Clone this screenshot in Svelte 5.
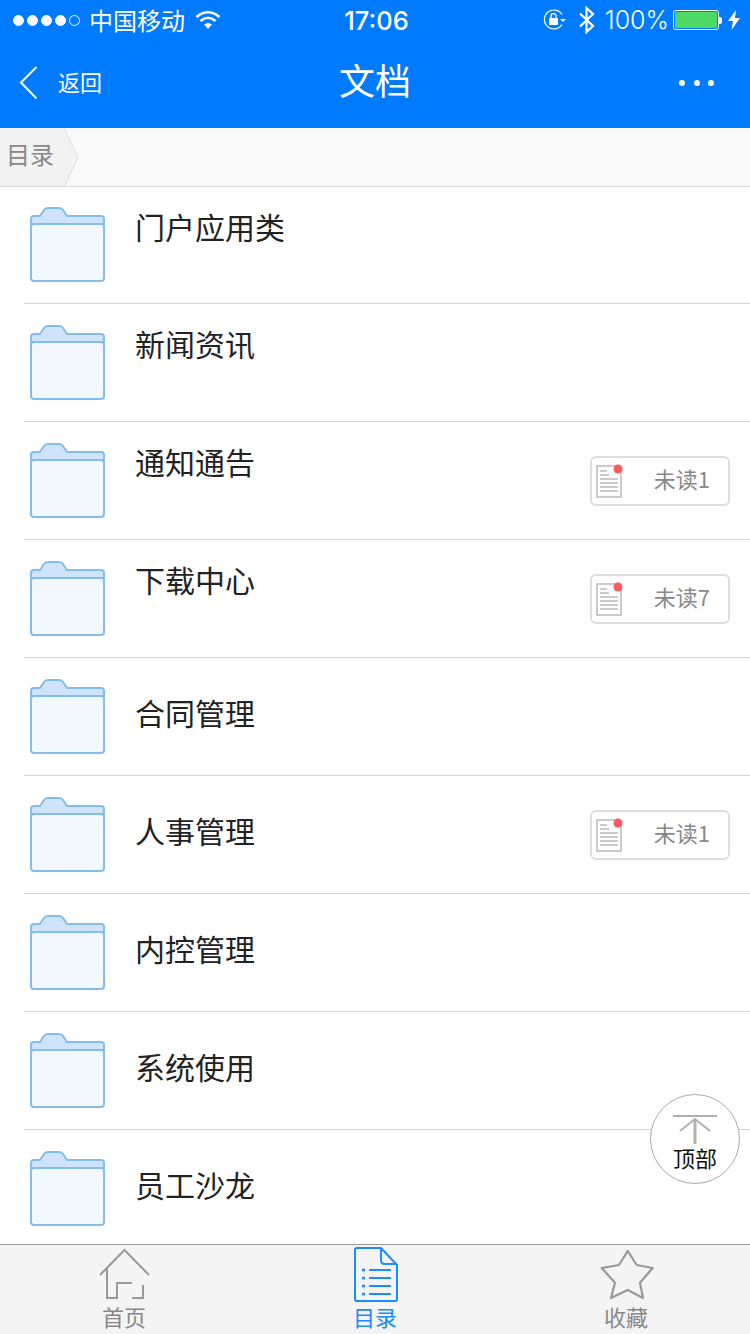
<script>
  const folders = [
    { name: '门户应用类', raised: true },
    { name: '新闻资讯', raised: true },
    { name: '通知通告', raised: true, unread: 1 },
    { name: '下载中心', raised: true, unread: 7 },
    { name: '合同管理' },
    { name: '人事管理', unread: 1 },
    { name: '内控管理' },
    { name: '系统使用' },
    { name: '员工沙龙' },
  ];
</script>

<div class="page">
  <header class="top">
    <div class="status">
      <div class="status-left">
        <span class="dots">
          <i></i><i></i><i></i><i></i><i class="empty"></i>
        </span>
        <span class="carrier">中国移动</span>
        <svg width="26" height="20" viewBox="0 0 26 20" fill="none" stroke="#fff" stroke-width="2.6">
          <path d="M1.5 7 Q13 -2.5 24.5 7" />
          <path d="M5.5 11 Q13 4.5 20.5 11" />
          <path d="M13 19 L9 14.5 Q13 11.5 17 14.5 Z" fill="#fff" stroke="none" />
        </svg>
      </div>
      <div class="time">17:06</div>
      <div class="status-right">
        <svg width="24" height="22" viewBox="0 0 24 22" fill="none">
          <path d="M19 5.5 A9.5 9.5 0 1 0 19 15.5" stroke="#fff" stroke-width="1.2" />
          <path d="M17 10 H23 L20 13 Z" fill="#fff" />
          <rect x="6" y="9" width="9" height="7" rx="1" fill="#fff" />
          <path d="M8 9 V7 A2.5 2.5 0 0 1 13 7 V9" stroke="#fff" stroke-width="1.3" />
        </svg>
        <svg class="bt" width="18" height="28" viewBox="0 0 18 28" fill="none" stroke="#fff" stroke-width="2.2">
          <path d="M2 7.5 L15 20 L8.5 26 V2 L15 8 L2 20.5" />
        </svg>
        <span class="percent">100%</span>
        <span class="battery"><span class="level"></span></span>
        <span class="nub"></span>
        <svg class="bolt" width="12" height="20" viewBox="0 0 12 20">
          <path d="M8 0 L0 11 H5 L3.500 20 L12 8 H7 Z" fill="#fff" />
        </svg>
      </div>
    </div>
    <nav class="nav">
      <div class="back">
        <svg width="19" height="34" viewBox="0 0 19 34" fill="none" stroke="#fff" stroke-width="2">
          <path d="M17.500 1 L2 16.500 L17.500 32.500" />
        </svg>
        <span>返回</span>
      </div>
      <div class="title">文档</div>
      <div class="more"><i></i><i></i><i></i></div>
    </nav>
  </header>

  <div class="crumbs">
    <span class="crumb">目录</span>
    <svg width="15" height="59" viewBox="0 0 15 59">
      <path d="M0 0 L14 29.500 L0 59 Z" fill="#f2f2f2" />
      <path d="M0 0 L14 29.500 L0 59" fill="none" stroke="#ddd" stroke-width="1" />
    </svg>
  </div>

  <ul class="list">
    {#each folders as item}
      <li class="row">
        <svg class="folder" width="76" height="76" viewBox="0 0 76 76">
          <rect x="1" y="17" width="73" height="57" rx="3" fill="#f3f8fe" stroke="#84bcee" stroke-width="2" />
          <path d="M1 17 V12 Q1 9 4 9 H10 L14 3 Q15 1 18 1 H29 Q32 1 33 3 L37 9 H71 Q74 9 74 12 V17 Z" fill="#cfe4fa" stroke="#84bcee" stroke-width="2" stroke-linejoin="round" />
        </svg>
        <span class="name" class:raised={item.raised}>{item.name}</span>
        {#if item.unread}
          <span class="badge">
            <svg width="28" height="36" viewBox="0 0 28 36" fill="none">
              <path d="M1 3 H20 L25 8 V34 H1 Z" fill="#fff" stroke="#bbb" stroke-width="1.500" />
              <path d="M4 8 H11 M4 12 H13 M4 16 H22 M4 20 H22 M4 24 H22 M4 28 H22" stroke="#bbb" stroke-width="1.500" />
              <circle cx="22" cy="6" r="4.500" fill="#ff5a5f" />
            </svg>
            <span class="unread">未读{item.unread}</span>
          </span>
        {/if}
      </li>
    {/each}
  </ul>

  <button class="to-top">
    <svg width="46" height="30" viewBox="0 0 46 30" fill="none" stroke="#b0b0b0" stroke-width="2">
      <path d="M1 1 H45" />
      <path d="M8 16 L23 4 L38 16" />
      <path d="M23 5 V29" stroke-width="3" />
    </svg>
    <span>顶部</span>
  </button>

  <footer class="tabs">
    <div class="tab">
      <svg width="52" height="56" viewBox="-1 0 52 56" fill="none" stroke="#999" stroke-width="2">
        <path d="M1 28 L25.500 3 L50 28" />
        <path d="M8 21 V51 H18 V36 H33" />
        <path d="M44 38 V51 H33" />
      </svg>
      <span>首页</span>
    </div>
    <div class="tab active">
      <svg width="46" height="56" viewBox="-2 0 46 56" fill="none" stroke="#1a8cff" stroke-width="2">
        <path d="M3 1 H27 L43 18 V52 Q43 54 41 54 H3 Q1 54 1 52 V3 Q1 1 3 1 Z" />
        <path d="M27 1 V13 Q27 17 31 17 H43" />
        <path d="M15 23 H37 M15 31 H37 M15 39 H37 M15 47 H37" />
        <path d="M8 23 H11 M8 31 H11 M8 39 H11 M8 47 H11" stroke-width="2.500" />
      </svg>
      <span>目录</span>
    </div>
    <div class="tab">
      <svg width="56" height="56" viewBox="0 0 56 56" fill="none" stroke="#999" stroke-width="2.200">
        <path d="M29.700 4 L38.700 18 L54.700 21 L42 35.700 L45 51 L29.700 43 L13 51 L17 35.700 L3.700 21 L21 18 Z" stroke-linejoin="round" />
      </svg>
      <span>收藏</span>
    </div>
  </footer>
</div>

<style>
  :global(body) {
    margin: 0;
    background: #fff;
  }
  .page {
    position: relative;
    display: flex;
    flex-direction: column;
    height: 1334px;
    overflow: hidden;
    font-family: "Noto Sans CJK SC", "Liberation Sans", sans-serif;
    color: #222;
  }
  .top {
    background: #007aff;
    color: #fff;
    height: 128px;
    flex-shrink: 0;
  }
  .status {
    display: grid;
    grid-template-columns: 1fr auto 1fr;
    align-items: center;
    height: 40px;
    padding: 0 10px 0 13px;
    font-family: Inter, "Noto Sans CJK SC", sans-serif;
    font-size: 24px;
  }
  .status-left {
    display: flex;
    align-items: center;
  }
  .dots {
    display: flex;
    gap: 3px;
  }
  .dots i {
    width: 11px;
    height: 11px;
    border-radius: 50%;
    background: #fff;
    border: 1px solid #fff;
    box-sizing: border-box;
  }
  .dots .empty {
    background: none;
  }
  .carrier {
    font-family: "Noto Sans CJK SC", sans-serif;
    margin: 0 10px 0 9px;
    line-height: 38px;
  }
  .time {
    font-weight: 500;
    font-size: 25.500px;
  }
  .status-right {
    display: flex;
    align-items: center;
    justify-content: flex-end;
  }
  .bt {
    margin-left: 11px;
  }
  .percent {
    margin-left: 9px;
    font-size: 25px;
    font-weight: 300;
  }
  .battery {
    margin-left: 4px;
    width: 46px;
    height: 20px;
    border: 1px solid #fff;
    border-radius: 3px;
    box-sizing: border-box;
    padding: 1px;
    display: flex;
  }
  .level {
    flex: 1;
    background: #4cd964;
    border-radius: 2px;
  }
  .nub {
    width: 3px;
    height: 7px;
    background: #fff;
    border-radius: 0 2px 2px 0;
  }
  .bolt {
    margin-left: 6px;
  }
  .nav {
    display: grid;
    grid-template-columns: 1fr auto 1fr;
    align-items: center;
    height: 88px;
    padding: 0 36px 2px;
    box-sizing: border-box;
  }
  .back {
    display: flex;
    align-items: center;
    gap: 20px;
    margin-left: -17px;
    font-size: 22px;
  }
  .back span {
    padding-bottom: 4px;
  }
  .title {
    font-size: 36px;
    line-height: 50px;
    padding-bottom: 8px;
  }
  .more {
    display: flex;
    justify-content: flex-end;
    gap: 8.500px;
  }
  .more i {
    width: 6px;
    height: 6px;
    border-radius: 50%;
    background: #fff;
  }
  .crumbs {
    display: flex;
    flex-shrink: 0;
    background: #f9f9f9;
    border-bottom: 1px solid #d8d8d8;
    height: 58px;
    overflow: hidden;
  }
  .crumb {
    width: 64px;
    box-sizing: border-box;
    padding-left: 6px;
    background: #f2f2f2;
    color: #888;
    font-size: 24px;
    line-height: 51px;
  }
  .list {
    flex: 1;
    min-height: 0;
    overflow: hidden;
    list-style: none;
    margin: 0;
    padding: 0;
  }
  .row {
    display: flex;
    align-items: center;
    height: 118px;
    box-sizing: border-box;
    margin-left: 24px;
    padding: 0 20px 0 6px;
    border-bottom: 1px solid #d6d6d6;
  }
  .row:first-child {
    height: 117px;
  }
  .row:last-child {
    border-bottom-color: transparent;
  }
  .folder {
    flex-shrink: 0;
  }
  .name {
    flex: 1;
    margin-left: 29px;
    padding-bottom: 10px;
    font-size: 30px;
    line-height: 42px;
    color: #222;
  }
  .name.raised {
    padding-bottom: 39px;
  }
  .badge {
    display: flex;
    align-items: center;
    justify-content: space-between;
    width: 140px;
    height: 50px;
    box-sizing: border-box;
    padding: 0 18px 0 4px;
    border: 2px solid #ddd;
    border-radius: 6px;
  }
  .unread {
    padding-bottom: 6px;
    color: #888;
    font-size: 22px;
  }
  .to-top {
    position: absolute;
    left: 650px;
    top: 1094px;
    width: 90px;
    height: 90px;
    padding: 20px 0 0;
    box-sizing: border-box;
    display: flex;
    flex-direction: column;
    align-items: center;
    background: #fff;
    border: 1px solid #aaa;
    border-radius: 50%;
    font-family: inherit;
    font-size: 22px;
    color: #111;
    line-height: 24px;
  }
  .tabs {
    display: flex;
    justify-content: space-between;
    height: 90px;
    flex-shrink: 0;
    box-sizing: border-box;
    padding: 2px 74px 0;
    background: #f4f4f4;
    border-top: 1px solid #999;
  }
  .tab {
    display: flex;
    flex-direction: column;
    align-items: center;
    width: 100px;
    color: #888;
    font-size: 22px;
    line-height: 26px;
  }
  .tab.active {
    color: #1a8cff;
  }
</style>
